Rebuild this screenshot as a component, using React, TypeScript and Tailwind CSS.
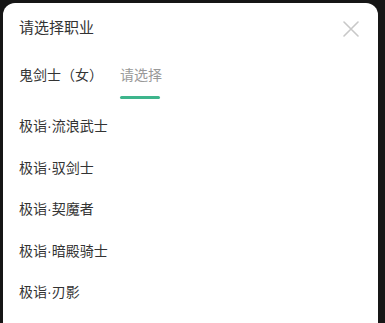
import React from 'react';

const items = ['极诣·流浪武士', '极诣·驭剑士', '极诣·契魔者', '极诣·暗殿骑士', '极诣·刃影'];

export default function App() {
  return (
    <div
      className="h-[323px] w-[385px] overflow-hidden bg-[#161616] pl-[3px] pr-[7px] pt-[3px]"
      style={{ fontFamily: '"Liberation Sans", "Noto Sans CJK SC", sans-serif' }}
    >
      <div className="h-full rounded-t-[12px] bg-white">
        {/* Header */}
        <div className="flex h-[50px] items-center justify-between pl-[16px] pr-[19px]">
          <span className="text-[15px] leading-5 text-[#333]">请选择职业</span>
          <svg width="16" height="16" viewBox="0 0 16 16" className="mb-[-2px]">
            <path d="M1 1L15 15M15 1L1 15" stroke="#c8c8c8" strokeWidth="1.6" strokeLinecap="round" />
          </svg>
        </div>

        {/* Tabs */}
        <div className="flex h-[46px] pl-[16px]">
          <div className="flex flex-col pt-[12px]">
            <span className="text-[14px] leading-5 text-[#333]">鬼剑士（女）</span>
          </div>
          <div className="ml-[17px] flex flex-col pt-[12px]">
            <span className="text-[14px] leading-5 text-[#999]">请选择</span>
            <div className="mt-[11px] h-[3px] w-[40px] rounded-full bg-[#3eb58c]" />
          </div>
        </div>

        {/* List */}
        <div className="mt-[7px] flex flex-col pl-[16px]">
          {items.map((name) => (
            <div key={name} className="flex h-[41.5px] items-center text-[14px] text-[#333]">
              {name}
            </div>
          ))}
        </div>
      </div>
    </div>
  );
}
